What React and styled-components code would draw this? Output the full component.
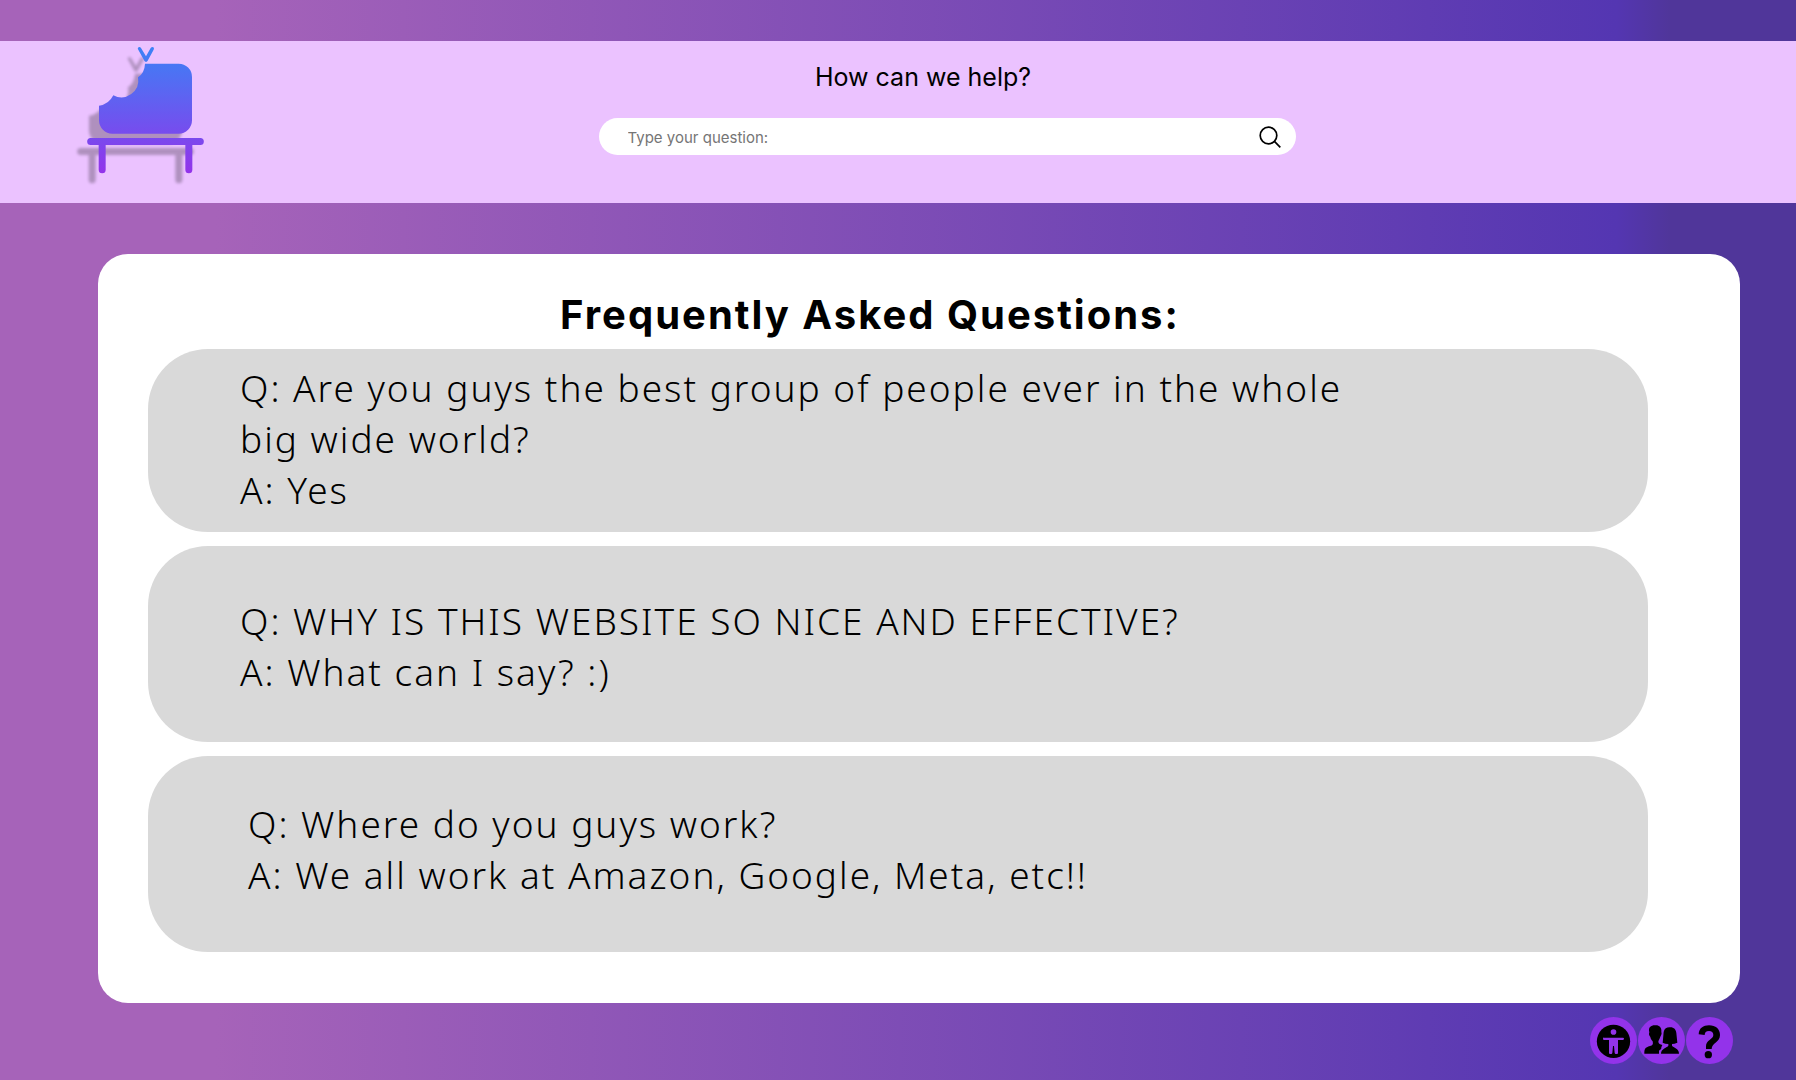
import React from "react";
import styled, { createGlobalStyle } from "styled-components";

const GlobalStyle = createGlobalStyle`
  *, *::before, *::after { box-sizing: border-box; }
  body { margin: 0; font-family: Inter, "Liberation Sans", sans-serif; color: #000; }
`;

const Page = styled.div`
  min-height: 100vh;
  padding-top: 41px;
  display: flex;
  flex-direction: column;
  background: linear-gradient(90deg, #a663b9 0%, #a663b9 12%, #5436b2 90%, #50369a 93%, #50369a 100%);
`;

const Header = styled.header`
  display: grid;
  grid-template-columns: 1fr 697px 1fr;
  align-items: start;
  height: 162px;
  background: #ebc2ff;
`;

const LogoLink = styled.a`
  display: block;
  width: 180px;
  height: 162px;
  margin-left: 60px;
`;

const Search = styled.form`
  display: flex;
  flex-direction: column;
  padding-top: 20px;
  margin-left: 49px;
  margin-right: -49px;
`;

const SearchLabel = styled.label`
  align-self: center;
  margin-right: 48px;
  font-size: 25px;
  line-height: 32px;
`;

const SearchBox = styled.div`
  display: flex;
  align-items: center;
  height: 37px;
  margin-top: 25px;
  padding: 0 15px 0 29px;
  border-radius: 20px;
  background: #fff;
`;

const SearchInput = styled.input`
  flex: 1;
  min-width: 0;
  padding: 2px 0 0;
  border: 0;
  outline: 0;
  background: transparent;
  font: 15px/20px Inter, "Liberation Sans", sans-serif;
  &::placeholder { color: #757575; opacity: 1; }
`;

const SearchButton = styled.button`
  display: flex;
  padding: 0;
  border: 0;
  background: none;
  color: #000;
  cursor: pointer;
`;

const Card = styled.main`
  margin: 51px 56px 0 98px;
  padding: 37px 92px 51px 50px;
  border-radius: 30px;
  background: #fff;
`;

const Title = styled.h1`
  margin: 0 56px 10px 0;
  font-size: 40px;
  line-height: 48px;
  font-weight: 700;
  letter-spacing: 2px;
  text-align: center;
`;

const List = styled.div`
  display: flex;
  flex-direction: column;
  gap: 14px;
`;

const Item = styled.article`
  min-height: ${(p) => (p.$compact ? 183 : 196)}px;
  padding: ${(p) => p.$top}px 280px 15px ${(p) => p.$left}px;
  border-radius: 60px;
  background: #d9d9d9;
  font-family: "Noto Sans", "Open Sans", sans-serif;
  font-weight: 300;
  font-size: 37px;
  line-height: 51px;
  letter-spacing: 2px;
`;

const Line = styled.p`
  margin: 0;
`;

const Footer = styled.footer`
  display: flex;
  justify-content: flex-end;
  gap: 1px;
  padding: 14px 63px 16px;
`;

const RoundButton = styled.button`
  width: 47px;
  height: 47px;
  padding: 0;
  border: 0;
  border-radius: 50%;
  background: #9333ea;
  cursor: pointer;
  svg { display: block; }
`;

function LogoShape() {
  return (
    <>
      <path d="M255 101H356A40 40 0 0 1 396 141V271A40 40 0 0 1 356 311H157A40 40 0 0 1 117 271V227Q146 224 160 196A51 51 0 0 0 234 142Q254 128 255 101Z" />
      <path d="M92 324H421A10.500 10.500 0 0 1 421 345H397V419A10.500 10.500 0 0 1 376 419V345H137V419A10.500 10.500 0 0 1 116 419V345H92A10.500 10.500 0 0 1 92 324Z" />
      <path d="M234 58C231 51 240 48 243 54L258 79L272 54C276 48 285 51 281 59L263 92Q258 99 253 92Z" />
    </>
  );
}

function Logo() {
  return (
    <svg width="180" height="162" viewBox="0 33 540 486" aria-hidden="true">
      <defs>
        <linearGradient id="logoFill" gradientUnits="userSpaceOnUse" x1="258" y1="50" x2="258" y2="430">
          <stop offset="0" stopColor="#3b82f6" />
          <stop offset="1" stopColor="#9333ea" />
        </linearGradient>
        <filter id="logoBlur" x="-20%" y="-20%" width="140%" height="140%">
          <feGaussianBlur stdDeviation="5" />
        </filter>
      </defs>
      <g transform="translate(-30 30)" opacity="0.25" filter="url(#logoBlur)">
        <LogoShape />
      </g>
      <g fill="url(#logoFill)">
        <LogoShape />
      </g>
    </svg>
  );
}

const SearchIcon = () => (
  <svg width="22" height="22" viewBox="0 0 22 22" fill="none" stroke="currentColor" strokeWidth="1.7" aria-hidden="true">
    <circle cx="9.500" cy="9.500" r="8.300" />
    <path d="M15.200 15.200L21.300 21.300" />
  </svg>
);

const AccessIcon = () => (
  <svg width="47" height="47" viewBox="0 0 141 141" aria-hidden="true">
    <circle cx="70.500" cy="73" r="50" />
    <g fill="#9333ea">
      <circle cx="70.500" cy="45" r="8.500" />
      <path d="M42 62H99Q102 62 102 65T99 69H84V108Q84 111 81 111H77Q75 111 74 108L72 87H69L67 108Q66 111 64 111H60Q57 111 57 108V69H42Q39 69 39 65T42 62Z" />
    </g>
  </svg>
);

const PeopleIcon = () => (
  <svg width="47" height="47" viewBox="0 0 141 141" aria-hidden="true">
    <path d="M34 46C30 31 39 25 50 25C62 23 72 30 70 45C72 50 70 54 67 59C65 66 62 69 61 74C61 80 67 82 73 84L70 91C71 96 68 98 63 101V110H19C19 95 21 92 36 87C44 85 46 83 44 73C40 69 38 65 37 60C33 56 32 51 34 46Z" />
    <path d="M77 45C79 34 88 30 97 31C108 31 114 38 115 48L118 77Q109 81 102 81V86C106 92 123 93 123 110H69C69 94 88 92 91 86V81Q81 81 74 77Z" />
  </svg>
);

const QuestionIcon = () => (
  <svg width="47" height="47" viewBox="0 0 141 141" aria-hidden="true">
    <path d="M38 52C39 33 52 25 69 25C89 25 102 36 102 54C102 76 77 78 77 96H60V88C60 69 82 67 82 54C82 46 77 42 69 42C60 42 56 47 56 54Z" />
    <circle cx="67" cy="113" r="11" />
  </svg>
);

const questions = [
  {
    top: 13,
    left: 92,
    compact: true,
    q: "Q: Are you guys the best group of people ever in the whole big wide world?",
    a: "A: Yes",
  },
  { top: 49, left: 92, q: "Q: WHY IS THIS WEBSITE SO NICE AND EFFECTIVE?", a: "A: What can I say? :)" },
  { top: 42, left: 100, q: "Q: Where do you guys work?", a: "A: We all work at Amazon, Google, Meta, etc!!" },
];

export default function App() {
  return (
    <Page>
      <GlobalStyle />
      <Header>
        <LogoLink href="#" aria-label="Home">
          <Logo />
        </LogoLink>
        <Search onSubmit={(e) => e.preventDefault()}>
          <SearchLabel htmlFor="question">How can we help?</SearchLabel>
          <SearchBox>
            <SearchInput id="question" type="text" placeholder="Type your question:" />
            <SearchButton type="submit" aria-label="Search">
              <SearchIcon />
            </SearchButton>
          </SearchBox>
        </Search>
      </Header>
      <Card>
        <Title>Frequently Asked Questions:</Title>
        <List>
          {questions.map((item) => (
            <Item key={item.q} $top={item.top} $left={item.left} $compact={item.compact}>
              <Line>{item.q}</Line>
              <Line>{item.a}</Line>
            </Item>
          ))}
        </List>
      </Card>
      <Footer>
        <RoundButton type="button" aria-label="Accessibility">
          <AccessIcon />
        </RoundButton>
        <RoundButton type="button" aria-label="Community">
          <PeopleIcon />
        </RoundButton>
        <RoundButton type="button" aria-label="Help">
          <QuestionIcon />
        </RoundButton>
      </Footer>
    </Page>
  );
}
